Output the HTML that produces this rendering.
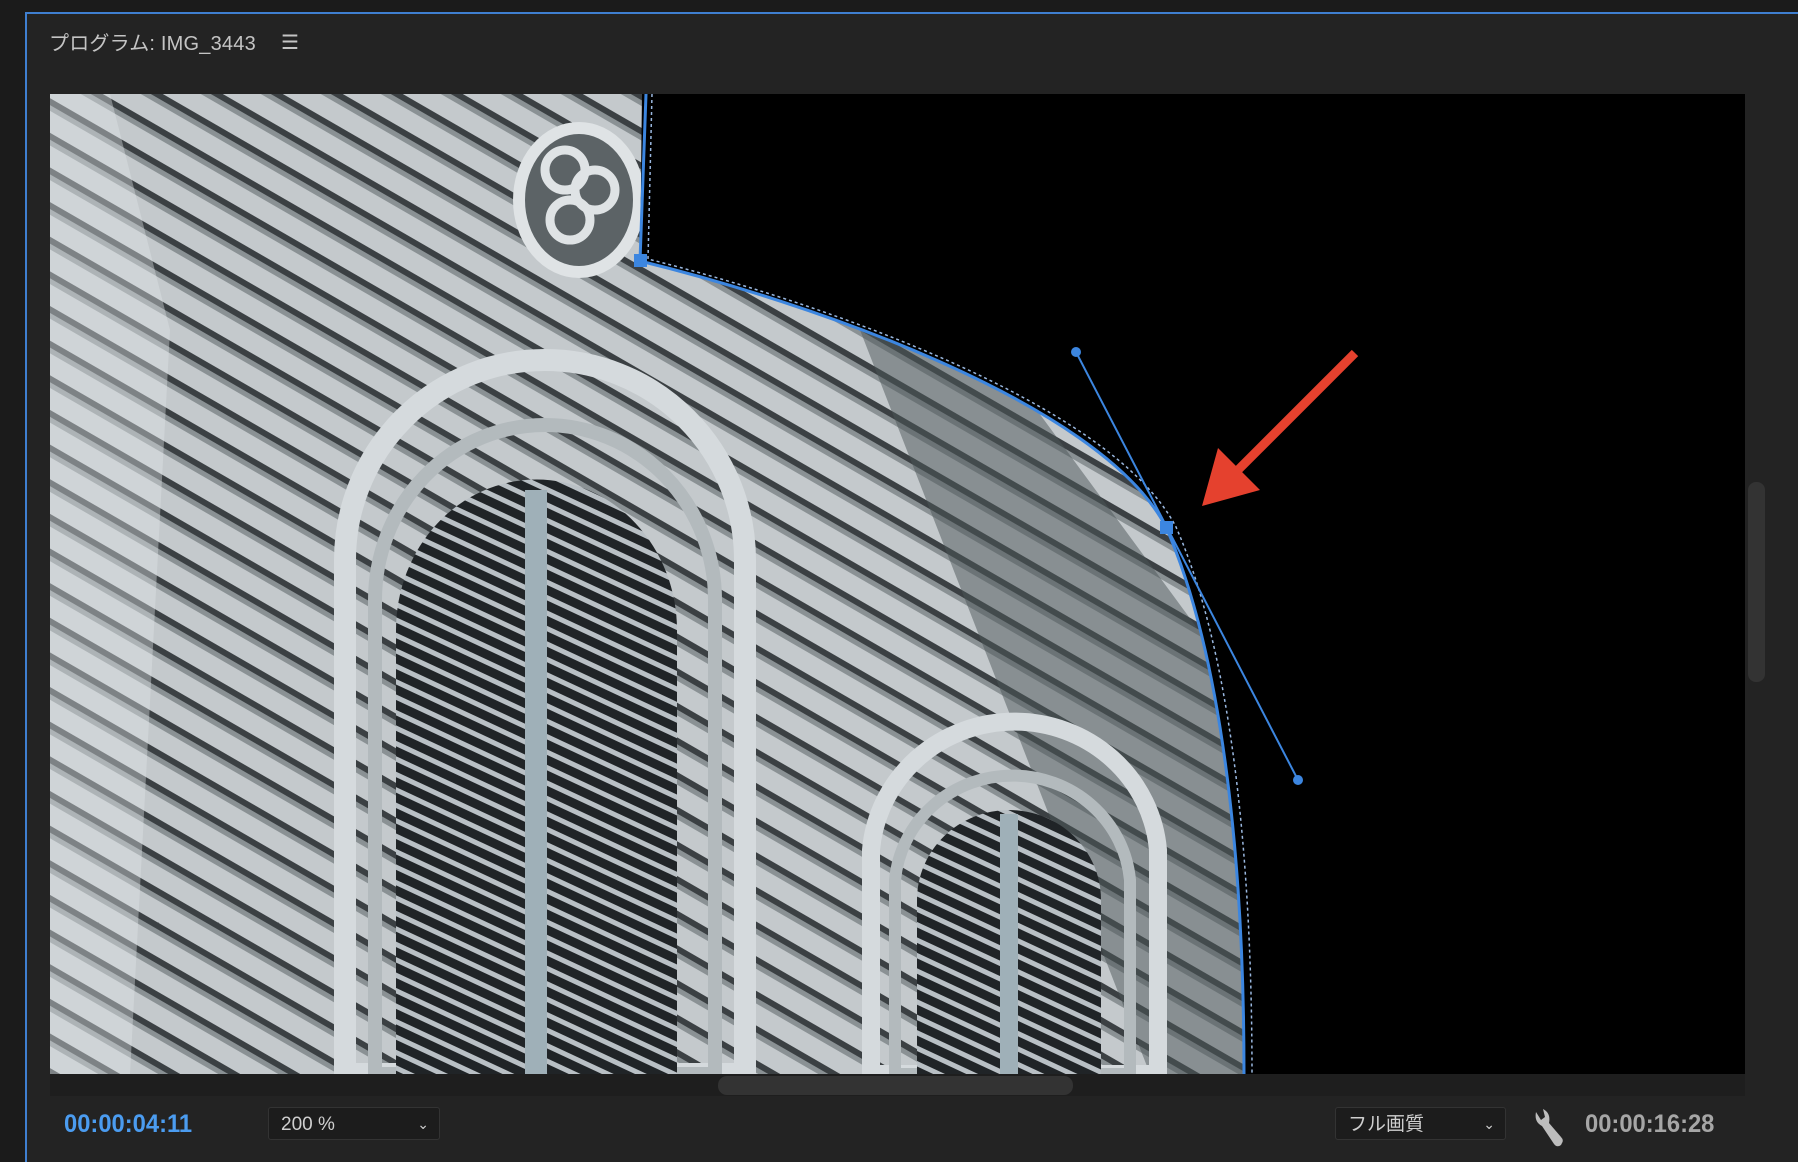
<!DOCTYPE html>
<html><head><meta charset="utf-8"><style>
html,body{margin:0;padding:0;width:1798px;height:1160px;overflow:hidden;background:#1b1b1b;font-family:"Liberation Sans","Noto Sans CJK JP",sans-serif}
.panel{position:absolute;left:25px;top:12px;width:1773px;height:1148px;background:#232323;border-left:2px solid #3f7fd0;border-top:2px solid #3f7fd0}
.title{position:absolute;left:49px;top:27px;color:#c4c4c4;font-size:20px;letter-spacing:0.2px}
.menu{position:absolute;left:281px;top:30px;color:#c4c4c4;font-size:20px}
.tc{position:absolute;font-size:25px;font-weight:bold;top:1110px;transform:scaleX(0.95);transform-origin:left}
.dd{position:absolute;top:1107px;height:33px;background:#1c1c1c;border:1px solid #333;border-radius:3px;color:#cfcfcf;font-size:19px;line-height:33px;padding-left:12px;box-sizing:border-box}
.dd span{position:absolute;right:10px;top:0;font-size:14px}
</style></head><body>
<div class="panel"></div>
<div class="title">プログラム: IMG_3443</div>
<div class="menu">☰</div>
<svg width="1798" height="1160" style="position:absolute;left:0;top:0">
<defs>
<pattern id="st" patternUnits="userSpaceOnUse" width="30" height="30" patternTransform="rotate(30)">
<rect width="30" height="30" fill="#c4c9cc"/><rect y="0" width="30" height="6" fill="#3b4043"/><rect y="6" width="30" height="5" fill="#8a9194"/>
</pattern>
<pattern id="lv" patternUnits="userSpaceOnUse" width="14" height="14" patternTransform="rotate(25)">
<rect width="14" height="14" fill="#202427"/><rect width="14" height="5" fill="#b9c0c5"/>
</pattern>
<clipPath id="cp"><path d="M50,94 L642,94 L640,261 C800,300 1100,400 1166,527 C1220,650 1244,850 1244,1074 L50,1074 Z"/></clipPath>
</defs>
<rect x="50" y="94" width="1695" height="980" fill="#000"/>
<g clip-path="url(#cp)">
<rect x="50" y="94" width="1200" height="980" fill="url(#st)"/>
<path d="M860,330 L1000,360 L1250,700 L1250,1074 L1150,1074 Z" fill="#4c5558" opacity="0.5"/>
<path d="M345,1074 L345,560 A200,200 0 0 1 745,560 L745,1074 Z" fill="none" stroke="#d5dadd" stroke-width="22"/>
<path d="M375,1074 L375,600 A170,175 0 0 1 715,600 L715,1074 Z" fill="none" stroke="#b3babd" stroke-width="14"/>
<path d="M396,1074 L396,630 A140,150 0 0 1 677,630 L677,1074 Z" fill="url(#lv)"/>
<rect x="525" y="490" width="22" height="584" fill="#9fb0b8"/>
<path d="M871,1074 L871,850 A144,140 0 0 1 1158,850 L1158,1074 Z" fill="none" stroke="#d5dadd" stroke-width="18"/>
<path d="M895,1074 L895,880 A118,115 0 0 1 1130,880 L1130,1074 Z" fill="none" stroke="#b3babd" stroke-width="12"/>
<path d="M917,1074 L917,900 A92,90 0 0 1 1101,900 L1101,1074 Z" fill="url(#lv)"/>
<rect x="1000" y="814" width="18" height="260" fill="#9fb0b8"/>
<ellipse cx="579" cy="200" rx="60" ry="72" fill="#5c6366" stroke="#dfe3e5" stroke-width="12"/>
<circle cx="565" cy="170" r="20" fill="none" stroke="#dfe3e5" stroke-width="9"/>
<circle cx="595" cy="190" r="20" fill="none" stroke="#dfe3e5" stroke-width="9"/>
<circle cx="570" cy="220" r="20" fill="none" stroke="#dfe3e5" stroke-width="9"/>
<path d="M50,94 L110,94 L170,330 L130,1074 L50,1074 Z" fill="#e2e6e8" opacity="0.4"/>
</g>
<path d="M652,94 L648,259 C810,300 1110,400 1176,527 C1230,650 1252,850 1252,1074" fill="none" stroke="#9ab8e0" stroke-width="1.5" stroke-dasharray="3,3"/>
<path d="M646,94 L640,261 C800,300 1100,400 1166,527 C1220,650 1244,850 1244,1074" fill="none" stroke="#3c86e0" stroke-width="3"/>
<line x1="1076" y1="352" x2="1298" y2="780" stroke="#3c86e0" stroke-width="2"/>
<circle cx="1076" cy="352" r="5" fill="#3c86e0"/><circle cx="1298" cy="780" r="5" fill="#3c86e0"/>
<rect x="634" y="254" width="13" height="13" fill="#3c86e0"/><rect x="1160" y="521" width="13" height="13" fill="#3c86e0"/>
<line x1="1355" y1="353" x2="1230" y2="478" stroke="#e5412e" stroke-width="9"/>
<polygon points="1202,506 1218,448 1260,490" fill="#e5412e"/>
<rect x="50" y="1074" width="1695" height="22" fill="#1e1e1e"/>
<rect x="718" y="1076" width="355" height="19" rx="9" fill="#333"/>
<rect x="1748" y="482" width="17" height="200" rx="8" fill="#333"/>
<path d="M1536,1112 q-2,10 6,14 l12,18 q3,4 7,1 l1,-2 q2,-3 -1,-6 l-12,-14 q2,-10 -6,-14 l2,8 l-4,3 z" fill="#bdbdbd"/>
</svg>
<div class="tc" style="left:64px;color:#4b9cf0">00:00:04:11</div>
<div class="dd" style="left:268px;width:172px">200 %<span>&#8964;</span></div>
<div class="dd" style="left:1335px;width:171px">フル画質<span>&#8964;</span></div>
<div class="tc" style="left:1585px;color:#a6a6a6">00:00:16:28</div>
</body></html>
